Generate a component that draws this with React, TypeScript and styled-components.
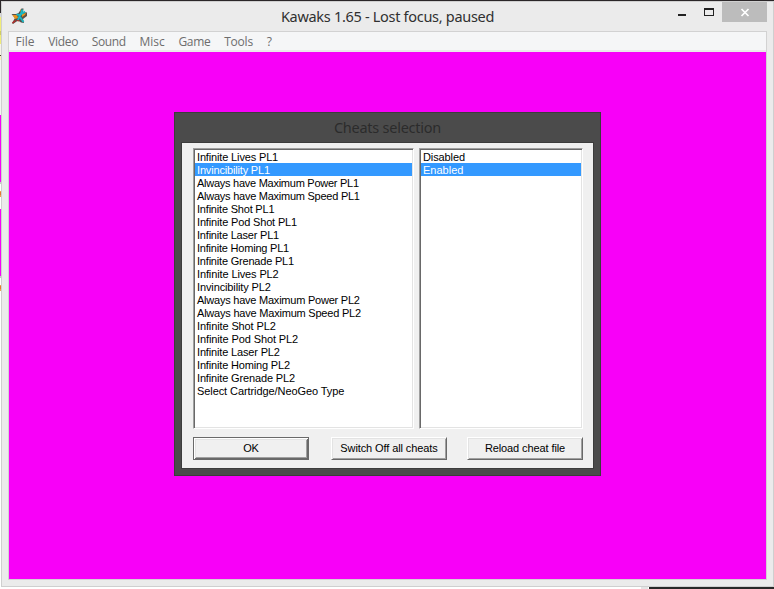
import React from "react";
import styled, { createGlobalStyle } from "styled-components";

const GlobalStyle = createGlobalStyle`
  *, *::before, *::after { box-sizing: border-box; }
  html, body { margin: 0; padding: 0; overflow: hidden; }
`;

const Desktop = styled.div`
  width: 774px;
  height: 589px;
  display: grid;
  grid-template-columns: 1px 773px;
  grid-template-rows: 1px 586px 2px;
  background: #fff;
`;

const TopEdge = styled.div`
  grid-column: 1 / 3;
  background: #2a2628;
`;

const LeftEdge = styled.div`
  background: linear-gradient(
    #2a2628 0 12px, #d8d8d8 12px 16px, #f0ec78 16px 30px, #cfcb62 30px 34px, #f0ec78 34px 43px,
    #f6f4e8 43px 54px, #4a3a2a 54px 55px, #fbf0b8 55px 59px, #f4f4f4 59px 114px, #f800f8 114px 181px,
    #c8c8c8 181px 183px, #fff 183px 190px, #f0a050 190px 191px, #e87830 191px 194px, #f0a050 194px 196px,
    #fff 196px 208px, #f800f8 208px 275px, #c8c8c8 275px 277px, #fff 277px 284px, #f0a050 284px 285px,
    #e87830 285px 288px, #f0a050 288px 290px, #fff 290px
  );
`;

const BottomEdge = styled.div`
  grid-column: 1 / 3;
  background: linear-gradient(90deg, #fff 0 641px, #e4e4e4 641px 648px, #fff 648px 649px, #282828 649px);
`;

const Window = styled.div`
  border: 1px solid #cfcfcf;
  background: #ebebeb;
  padding: 0 6px 6px;
  display: flex;
  flex-direction: column;
`;

const TitleBar = styled.header`
  height: 29px;
  flex: none;
  display: grid;
  grid-template-columns: 130px 1fr 130px;
`;

const AppIcon = styled.svg`
  margin: 6px 0 0 3px;
`;

const Title = styled.h1<{ $dialog?: boolean }>`
  margin: 0;
  text-align: center;
  font: 400 14.5px/29px "Noto Sans", "Open Sans", sans-serif;
  letter-spacing: ${(p) => (p.$dialog ? "-0.25px" : "-0.3px")};
  color: ${(p) => (p.$dialog ? "#2b2b2b" : "#303030")};
  white-space: nowrap;
`;

const Controls = styled.div`
  display: flex;
  justify-content: flex-end;
  height: 20px;
`;

const ControlButton = styled.button<{ $width: number; $close?: boolean }>`
  width: ${(p) => p.$width}px;
  height: 20px;
  padding: 0;
  border: 0;
  display: block;
  line-height: 0;
  background: ${(p) => (p.$close ? "#bcbcbc" : "transparent")};
`;

const Client = styled.main`
  border: 1px solid #d2d2d2;
  flex: 1;
  display: flex;
  flex-direction: column;
`;

const MenuBar = styled.nav`
  height: 20px;
  flex: none;
  display: flex;
  gap: 13.7px;
  padding-left: 6.5px;
  background: #f5f6f7;
  border-bottom: 2px solid #e9e9e9;
`;

const MenuItem = styled.span<{ $spacing: number }>`
  font: 400 12px/20px "Open Sans", "Noto Sans", sans-serif;
  letter-spacing: ${(p) => p.$spacing}px;
  color: #6d6d6d;
  height: 18px;
`;

const Screen = styled.div`
  flex: 1;
  background: #f800f8;
  padding: 60px 0 0 165px;
`;

const Dialog = styled.section`
  width: 427px;
  height: 364px;
  border: 1px solid #3c3c3c;
  background: #4b4b4b;
  padding: 0 6px 6px;
  display: flex;
  flex-direction: column;
`;

const DialogBody = styled.div`
  height: 327px;
  border: 1px solid #3c3c3c;
  background: #f0f0f0;
  padding: 5px 10px 0 11px;
`;

const Lists = styled.div`
  display: flex;
  justify-content: space-between;
  height: 281px;
`;

const ListBox = styled.ul<{ $width: number }>`
  width: ${(p) => p.$width}px;
  margin: 0;
  padding: 1px;
  list-style: none;
  background: #fff;
  border: 1px solid;
  border-color: #a0a0a0 #fff #fff #a0a0a0;
  box-shadow: inset 1px 1px 0 #696969, inset -1px -1px 0 #e3e3e3;
`;

const Row = styled.li<{ $selected?: boolean; $spacing: number }>`
  height: 13px;
  padding-left: 2px;
  font: 11px/14px "Liberation Sans", Arial, sans-serif;
  letter-spacing: ${(p) => p.$spacing}px;
  white-space: nowrap;
  color: ${(p) => (p.$selected ? "#fff" : "#000")};
  background: ${(p) => (p.$selected ? "#3399ff" : "transparent")};
`;

const Actions = styled.div`
  display: flex;
  padding-top: 8px;
`;

const ActionButton = styled.button<{ $default?: boolean; $gap: number }>`
  width: 116px;
  height: 23px;
  margin: 0 0 0 ${(p) => p.$gap}px;
  padding: 0;
  border: 1px solid;
  border-color: ${(p) => (p.$default ? "#696969" : "#fff #696969 #696969 #fff")};
  background: #f0f0f0;
  box-shadow: ${(p) =>
    p.$default
      ? "inset 1px 1px 0 #fff, inset -1px -1px 0 #696969, inset 2px 2px 0 #e3e3e3, inset -2px -2px 0 #a0a0a0"
      : "inset 1px 1px 0 #e3e3e3, inset -1px -1px 0 #a0a0a0"};
  font: 11px/19px "Liberation Sans", Arial, sans-serif;
  letter-spacing: -0.1px;
  color: #000;
  white-space: nowrap;
`;

const menus: [string, number][] = [
  ["File", 0], ["Video", -0.3], ["Sound", -0.4], ["Misc", 0], ["Game", -0.3], ["Tools", -0.2], ["?", 0],
];

const cheats: [string, number][] = [
  ["Infinite Lives PL1", -0.15], ["Invincibility PL1", -0.17], ["Always have Maximum Power PL1", -0.26],
  ["Always have Maximum Speed PL1", -0.25], ["Infinite Shot PL1", -0.2], ["Infinite Pod Shot PL1", -0.16],
  ["Infinite Laser PL1", -0.2], ["Infinite Homing PL1", -0.21], ["Infinite Grenade PL1", -0.2],
  ["Infinite Lives PL2", -0.12], ["Invincibility PL2", -0.12], ["Always have Maximum Power PL2", -0.23],
  ["Always have Maximum Speed PL2", -0.21], ["Infinite Shot PL2", -0.12], ["Infinite Pod Shot PL2", -0.11],
  ["Infinite Laser PL2", -0.16], ["Infinite Homing PL2", -0.16], ["Infinite Grenade PL2", -0.15],
  ["Select Cartridge/NeoGeo Type", -0.08],
];

const options: [string, number][] = [["Disabled", -0.1], ["Enabled", 0]];

export default function App() {
  return (
    <>
      <GlobalStyle />
      <Desktop>
        <TopEdge />
        <LeftEdge />
        <Window>
          <TitleBar>
            <AppIcon width="17" height="17" viewBox="0 0 17 17">
              <path d="M.5 6h5l2-1 3-4.5h2L12 4l4 .5V8l-4 3 1 4-3-.5-3-2-5 3.5-1-1L4 10z" fill="#5a5048" />
              <path d="M1.500 7H6l1 3-3 1zM11 6l4-1-1 2-3 2zM9 2l1-1-1 4z" fill="#e8941c" />
              <path d="M11.500 1.500L9.500 7l-4-.5M14 3.500L9 7l-2 5M9 9l3.500 5" stroke="#18b8c4" strokeWidth="1.900" fill="none" />
              <path d="M1.500 15l3-2.500M6 12.500l2 .5" stroke="#c02828" strokeWidth="1.200" fill="none" />
            </AppIcon>
            <Title>Kawaks 1.65 - Lost focus, paused</Title>
            <Controls>
              <ControlButton $width={27} aria-label="Minimize">
                <svg width="27" height="20" shapeRendering="crispEdges">
                  <path d="M10 12h8v2h-8z" fill="#222" />
                </svg>
              </ControlButton>
              <ControlButton $width={27} aria-label="Maximize">
                <svg width="27" height="20" shapeRendering="crispEdges">
                  <path d="M9 6h10v8H9zM10 8v5h8V8z" fill="#222" fillRule="evenodd" />
                </svg>
              </ControlButton>
              <ControlButton $width={45} $close aria-label="Close">
                <svg width="45" height="20">
                  <path d="M19.500 7l7 7M26.500 7l-7 7" stroke="#fff" strokeWidth="1.700" />
                </svg>
              </ControlButton>
            </Controls>
          </TitleBar>
          <Client>
            <MenuBar>
              {menus.map(([label, spacing]) => (
                <MenuItem key={label} $spacing={spacing}>{label}</MenuItem>
              ))}
            </MenuBar>
            <Screen>
              <Dialog>
                <Title as="h2" $dialog>Cheats selection</Title>
                <DialogBody>
                  <Lists>
                    <ListBox $width={221}>
                      {cheats.map(([label, spacing]) => (
                        <Row key={label} $spacing={spacing} $selected={label === "Invincibility PL1"}>{label}</Row>
                      ))}
                    </ListBox>
                    <ListBox $width={164}>
                      {options.map(([label, spacing]) => (
                        <Row key={label} $spacing={spacing} $selected={label === "Enabled"}>{label}</Row>
                      ))}
                    </ListBox>
                  </Lists>
                  <Actions>
                    <ActionButton $default $gap={0}>OK</ActionButton>
                    <ActionButton $gap={22}>Switch Off all cheats</ActionButton>
                    <ActionButton $gap={20}>Reload cheat file</ActionButton>
                  </Actions>
                </DialogBody>
              </Dialog>
            </Screen>
          </Client>
        </Window>
        <BottomEdge />
      </Desktop>
    </>
  );
}
